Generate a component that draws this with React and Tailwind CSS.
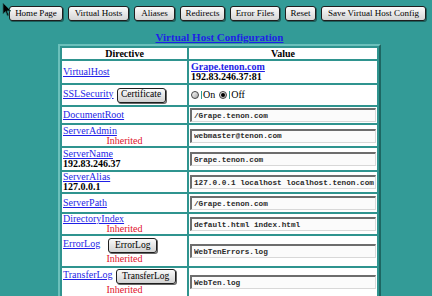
import React from 'react';

const link = 'text-[#1f1fe6] underline';
const red = 'text-center text-[#e0102a] leading-[10px]';

function TopButton({ w, children }) {
  return (
    <button className={`${w} h-[15px] flex items-center justify-center rounded-[3px] border border-[#1e1e1e] bg-gradient-to-b from-[#fafafa] to-[#d6d6d6] text-[9px] leading-none text-black shadow-[1px_1px_0_#1d5f5c]`}>
      {children}
    </button>
  );
}

function SmallButton({ w, children }) {
  return (
    <button className={`${w} h-[15px] flex items-center justify-center rounded-[3px] border border-[#1e1e1e] bg-gradient-to-b from-[#fafafa] to-[#d2d2d2] text-[9.5px] leading-none text-black shadow-[1px_1px_0_#666]`}>
      {children}
    </button>
  );
}

function Field({ value }) {
  return (
    <input
      readOnly
      value={value}
      className="h-[14px] w-[186px] border-t-2 border-l-2 border-b border-r border-t-[#6d6d6d] border-l-[#6d6d6d] border-b-[#d8d8d8] border-r-[#d8d8d8] bg-[#fbfbfb] pl-[2px] font-['Liberation_Mono',monospace] text-[7.7px] font-bold leading-[10px] text-[#2a2a2a] outline-none"
    />
  );
}

function Row({ h, left, right }) {
  return (
    <>
      <div className={`${h} flex flex-col justify-center bg-white px-[1px]`}>{left}</div>
      <div className="flex flex-col justify-center bg-white px-[1px]">{right}</div>
    </>
  );
}

function Radio({ on }) {
  return (
    <span className="flex items-center">
      <span className="flex h-[8px] w-[8px] items-center justify-center rounded-full border border-[#444] bg-gradient-to-br from-[#ffffff] to-[#a8a8a8]">
        {on && <span className="h-[4px] w-[4px] rounded-full bg-black" />}
      </span>
      <span className="ml-[2px] h-[8px] w-[1px] bg-[#2f9a94]" />
    </span>
  );
}

export default function App() {
  return (
    <div className="relative h-[296px] w-[432px] overflow-hidden bg-[#339b97] font-['Liberation_Serif',serif] text-[10px] leading-[10px] text-black">
      <svg className="absolute left-[2px] top-[2px]" width="11" height="15" viewBox="0 0 11 15">
        <path d="M1 1 L1 12 L3.5 9.5 L5.5 14 L7 13.3 L5 9 L9 9 Z" fill="#000" stroke="#2a6d6a" strokeWidth="0.8" />
      </svg>

      <div className="flex gap-[5px] pl-[9px] pt-[6px]">
        <TopButton w="w-[54px]">Home Page</TopButton>
        <TopButton w="w-[61px]">Virtual Hosts</TopButton>
        <TopButton w="w-[41px]">Aliases</TopButton>
        <TopButton w="w-[45px]">Redirects</TopButton>
        <TopButton w="w-[50px]">Error Files</TopButton>
        <TopButton w="w-[31px]">Reset</TopButton>
        <TopButton w="w-[105px]">Save Virtual Host Config</TopButton>
      </div>

      <div className="ml-[58px] w-[323px]">
        <div className="mt-[11px] text-center text-[11px] font-bold leading-[10px]">
          <a className={link}>Virtual Host Configuration</a>
        </div>

        <div className="mt-[2px] grid grid-cols-[125px_188px] gap-[2px] border-2 border-t-[#6cc0bb] border-l-[#6cc0bb] border-b-[#1d6662] border-r-[#1d6662] bg-[#2f948f] p-[2px]">
          <Row h="h-[11px]" left={<div className="text-center font-bold">Directive</div>} right={<div className="text-center font-bold">Value</div>} />

          <Row
            h="h-[22px]"
            left={<a className={link}>VirtualHost</a>}
            right={
              <div className="pl-[1px] font-bold">
                <a className={link}>Grape.tenon.com</a>
                <div>192.83.246.37:81</div>
              </div>
            }
          />

          <Row
            h="h-[20px]"
            left={
              <div className="flex items-center gap-[3px]">
                <a className={`${link} -mt-[3px]`}>SSLSecurity</a>
                <SmallButton w="w-[49px]">Certificate</SmallButton>
              </div>
            }
            right={
              <div className="flex items-center pl-[1px]">
                <Radio />
                <span className="ml-[1px]">On</span>
                <span className="ml-[4px]"><Radio on /></span>
                <span className="ml-[1px]">Off</span>
              </div>
            }
          />

          <Row h="h-[16px]" left={<a className={link}>DocumentRoot</a>} right={<Field value="/Grape.tenon.com" />} />

          <Row
            h="h-[21px]"
            left={
              <>
                <a className={link}>ServerAdmin</a>
                <div className={red}>Inherited</div>
              </>
            }
            right={<Field value="webmaster@tenon.com" />}
          />

          <Row
            h="h-[22px]"
            left={
              <>
                <a className={link}>ServerName</a>
                <div className="font-bold">192.83.246.37</div>
              </>
            }
            right={<Field value="Grape.tenon.com" />}
          />

          <Row
            h="h-[20px]"
            left={
              <>
                <a className={link}>ServerAlias</a>
                <div className="font-bold">127.0.0.1</div>
              </>
            }
            right={<Field value="127.0.0.1 localhost localhost.tenon.com" />}
          />

          <Row h="h-[18px]" left={<a className={link}>ServerPath</a>} right={<Field value="/Grape.tenon.com" />} />

          <Row
            h="h-[20px]"
            left={
              <>
                <a className={link}>DirectoryIndex</a>
                <div className={red}>Inherited</div>
              </>
            }
            right={<Field value="default.html index.html" />}
          />

          <Row
            h="h-[30px]"
            left={
              <>
                <div className="flex items-center gap-[8px]">
                  <a className={`${link} -mt-[4px]`}>ErrorLog</a>
                  <SmallButton w="w-[49px]">ErrorLog</SmallButton>
                </div>
                <div className={`${red} mt-[1px]`}>Inherited</div>
              </>
            }
            right={<Field value="WebTenErrors.log" />}
          />

          <Row
            h="h-[28px]"
            left={
              <>
                <div className="flex items-center gap-[3px]">
                  <a className={`${link} -mt-[3px]`}>TransferLog</a>
                  <SmallButton w="w-[60px]">TransferLog</SmallButton>
                </div>
                <div className={`${red} mt-[1px]`}>Inherited</div>
              </>
            }
            right={<Field value="WebTen.log" />}
          />
        </div>
      </div>
    </div>
  );
}
